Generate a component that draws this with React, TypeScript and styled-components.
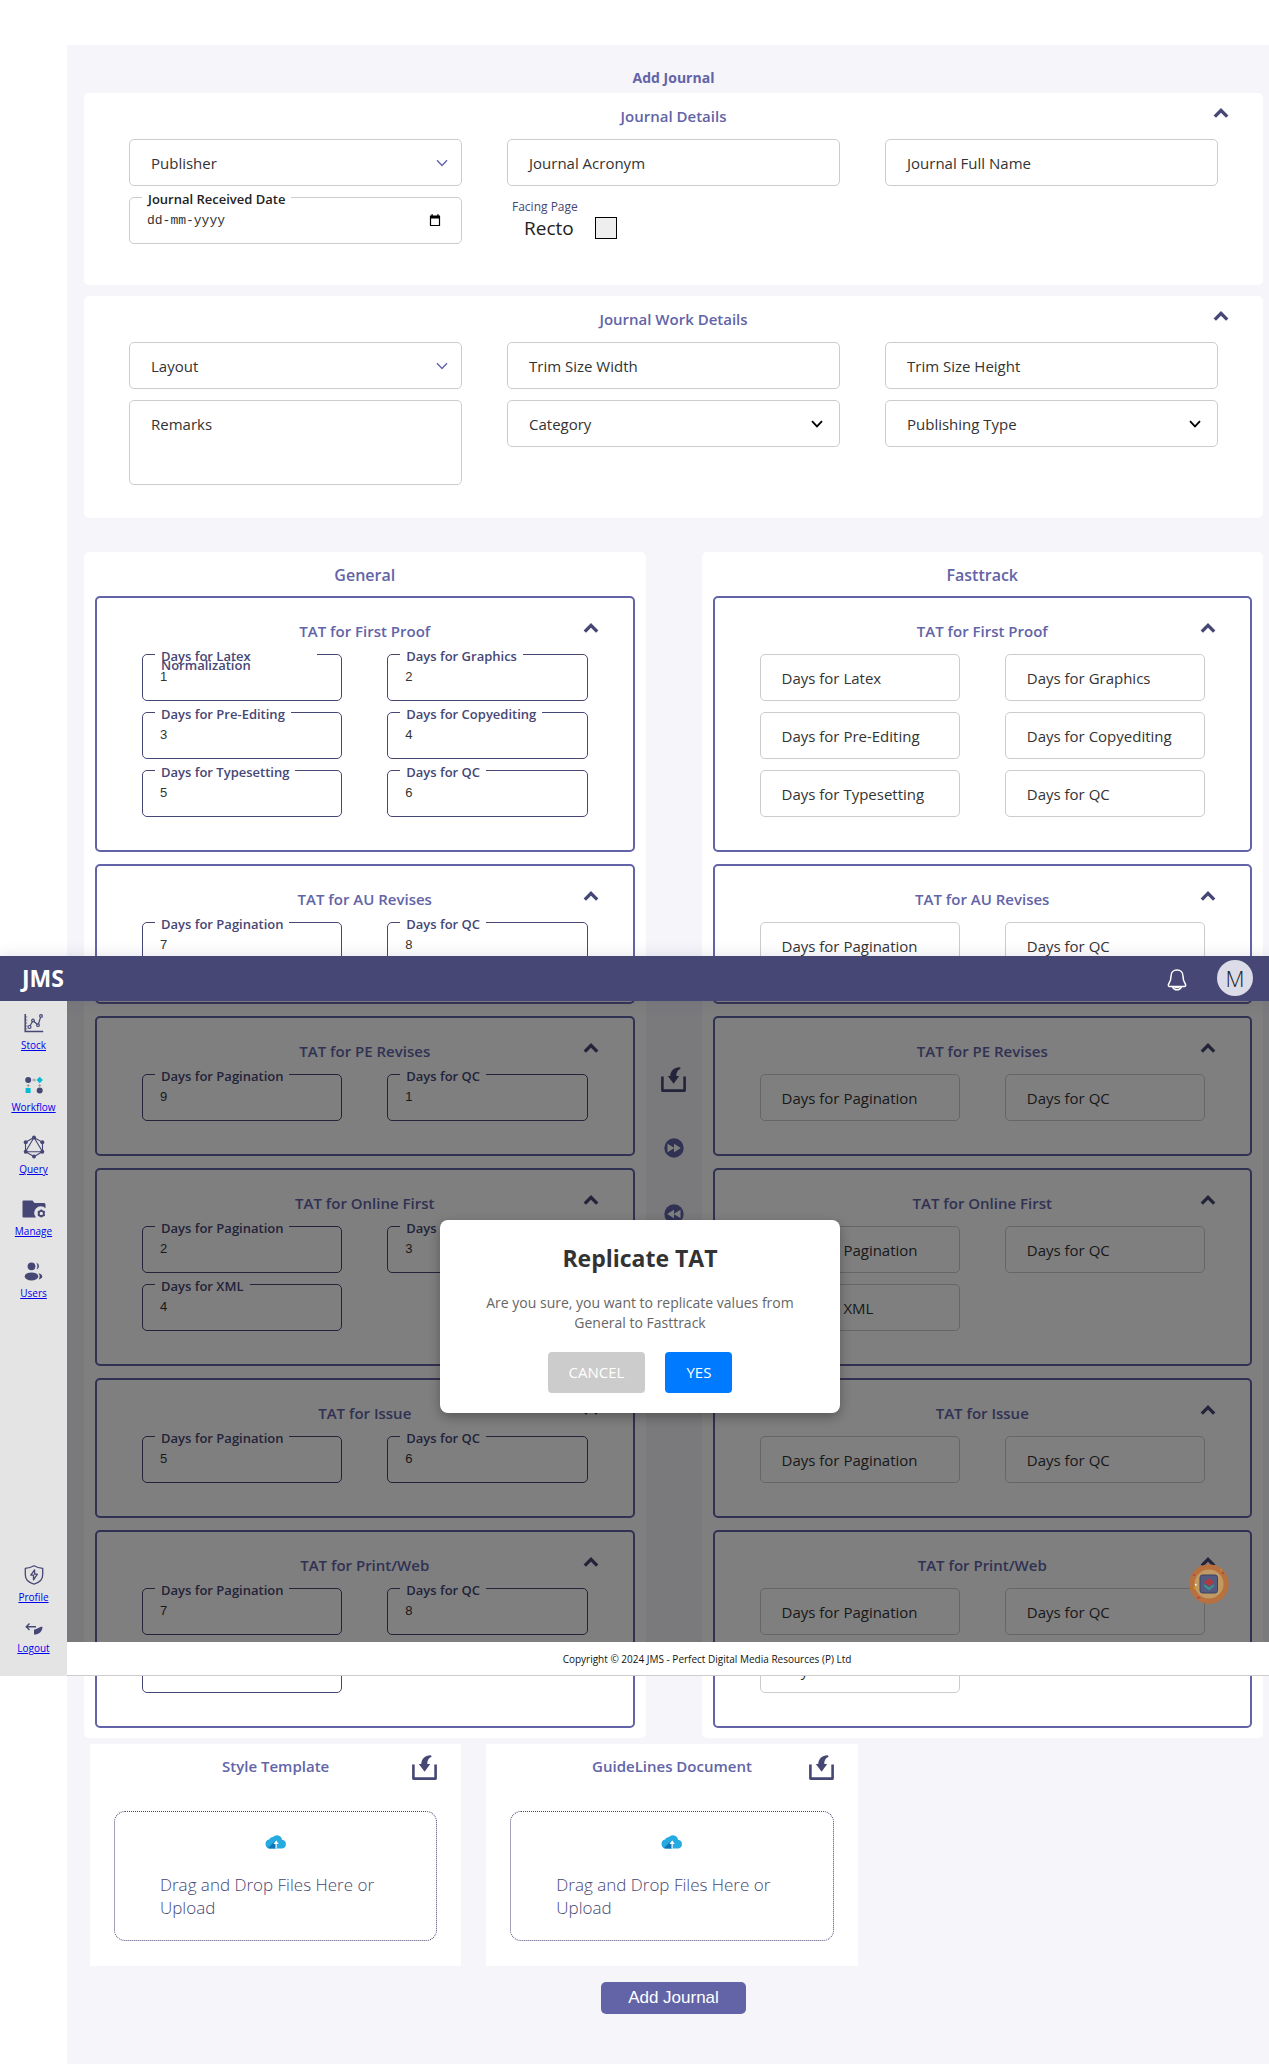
import React, { useId } from "react";
import styled, { createGlobalStyle, css } from "styled-components";

const color = {
  primary: "#6264a7",
  dark: "#464775",
  page: "#f5f5fa",
  line: "#cccccc",
  text: "#333333",
};

const sans = `"Open Sans", "Noto Sans", sans-serif`;

const GlobalStyle = createGlobalStyle`
  *, *::before, *::after { box-sizing: border-box; }
  body { margin: 0; background: #fff; font-family: ${sans}; color: ${color.text}; }
  h1, h2, h3, p { margin: 0; }
  button, input, select, textarea { font-family: inherit; margin: 0; }
`;

const Page = styled.div`
  position: relative;
  padding: 45px 0 0 67px;
`;

const Main = styled.main`
  background: ${color.page};
  padding: 0 6px 50px 17px;
`;

const PageTitle = styled.h1`
  padding: 22px 0 4px;
  font-size: 14px;
  line-height: 22px;
  font-weight: 700;
  text-align: center;
  color: ${color.primary};
`;

const Panel = styled.section<{ $bottom: number }>`
  background: #fff;
  border-radius: 5px;
  padding-bottom: ${(p) => p.$bottom}px;
  margin-bottom: 11px;
`;

const SectionHeader = styled.header`
  display: grid;
  grid-template-columns: 1fr auto 1fr;
  align-items: start;
  height: 46px;
  padding: 12px 34px 0;
`;

const SectionTitle = styled.h2`
  grid-column: 2;
  font-size: 15px;
  line-height: 22px;
  font-weight: 600;
  color: ${color.primary};
`;

const IconButton = styled.button`
  display: inline-flex;
  align-items: center;
  justify-content: center;
  justify-self: end;
  padding: 0;
  border: 0;
  background: none;
  color: ${color.dark};
  cursor: pointer;
`;

const FieldGrid = styled.div<{ $columns: number }>`
  display: grid;
  grid-template-columns: repeat(${(p) => p.$columns}, minmax(0, 1fr));
  gap: 11px 45px;
  align-items: start;
  padding: 0 45px;
`;

const FieldBox = styled.div<{ $active?: boolean; $height?: number }>`
  position: relative;
  display: flex;
  height: ${(p) => p.$height ?? 47}px;
  border: 1px solid ${(p) => (p.$active ? color.dark : color.line)};
  border-radius: 5px;
  background: #fff;
`;

const floated = css`
  top: -3px;
  left: 12px;
  max-width: calc(100% - 36px);
  padding: 0 6px;
  background: #fff;
  font-size: 13px;
  line-height: 9px;
  font-weight: 600;
  white-space: normal;
`;

const resting = css`
  top: 12px;
  left: 21px;
  font-size: 15px;
  line-height: 22px;
  font-weight: 400;
  white-space: nowrap;
  color: ${color.text};
`;

const FieldLabel = styled.label<{ $floated: boolean; $ink?: string }>`
  position: absolute;
  color: ${(p) => p.$ink ?? color.dark};
  ${(p) => (p.$floated ? floated : resting)}
`;

const control = css`
  flex: 1;
  min-width: 0;
  border: 0;
  outline: 0;
  background: transparent;
  color: ${color.text};
`;

const TextInput = styled.input`
  ${control}
  padding: 0 17px 2px;
  font-family: "Liberation Sans", sans-serif;
  font-size: 13px;
`;

const DateInput = styled.input`
  ${control}
  padding: 0 17px;
  font-family: "Liberation Mono", monospace;
  font-size: 13px;
  &::placeholder { color: ${color.text}; opacity: 1; }
`;

const Select = styled.select`
  ${control}
  appearance: none;
  padding: 0 21px;
  font-size: 15px;
`;

const SelectArrow = styled.span<{ $ink: string; $right: number }>`
  position: absolute;
  top: 0;
  right: ${(p) => p.$right}px;
  height: 100%;
  display: flex;
  align-items: center;
  color: ${(p) => p.$ink};
  pointer-events: none;
`;

const TextArea = styled.textarea`
  ${control}
  resize: none;
  padding: 12px 21px;
  font-size: 15px;
`;

const CalendarButton = styled(IconButton)`
  padding-right: 20px;
  color: #000;
`;

const Facing = styled.div`
  padding: 0 5px;
`;

const FacingCaption = styled.div`
  font-size: 12px;
  line-height: 20px;
  font-weight: 500;
  color: ${color.dark};
`;

const FacingRow = styled.label`
  display: flex;
  align-items: center;
  gap: 21px;
  padding-left: 12px;
  font-size: 19px;
  line-height: 22px;
  color: #222;
`;

const Checkbox = styled.input`
  appearance: none;
  width: 22px;
  height: 22px;
  border: 1px solid #000;
  background: #eeeeee;
`;

const Compare = styled.div`
  display: grid;
  grid-template-columns: minmax(0, 1fr) 56px minmax(0, 1fr);
  margin-top: 34px;
`;

const Track = styled.section`
  display: flex;
  flex-direction: column;
  gap: 12px;
  padding: 0 11px 10px;
  border-radius: 5px;
  background: #fff;
`;

const TrackTitle = styled.h2`
  height: 32px;
  padding-top: 12px;
  font-size: 16px;
  line-height: 22px;
  font-weight: 600;
  text-align: center;
  color: ${color.primary};
`;

const TatCard = styled.div`
  padding: 10px 0 33px;
  border: 2px solid ${color.primary};
  border-radius: 5px;
`;

const Transfer = styled.div`
  display: flex;
  flex-direction: column;
  align-items: center;
  justify-content: center;
  gap: 46px;
`;

const Uploads = styled.div`
  display: grid;
  grid-template-columns: repeat(3, minmax(0, 1fr));
  gap: 25px;
  padding: 6px 9px 16px 6px;
`;

const UploadCard = styled.section`
  padding: 0 24px 25px;
  background: #fff;
`;

const UploadHeader = styled.header`
  display: grid;
  grid-template-columns: 1fr auto 1fr;
  align-items: start;
  height: 67px;
  padding-top: 11px;
`;

const DropZone = styled.label`
  display: flex;
  flex-direction: column;
  align-items: center;
  height: 130px;
  padding: 22px 45px 0;
  border: 1px dotted ${color.dark};
  border-radius: 11px;
  color: ${color.dark};
  cursor: pointer;
`;

const DropText = styled.span`
  align-self: stretch;
  margin-top: 24px;
  font-size: 17px;
  line-height: 23px;
  font-weight: 300;
`;

const HiddenFile = styled.input`
  position: absolute;
  width: 1px;
  height: 1px;
  opacity: 0;
`;

const Actions = styled.div`
  display: flex;
  justify-content: center;
`;

const SubmitButton = styled.button`
  height: 32px;
  padding: 0 27px;
  border: 0;
  border-radius: 5px;
  background: ${color.primary};
  font-family: "Liberation Sans", sans-serif;
  font-size: 17px;
  color: #fff;
`;

/* The visible window: top bar, side navigation, footer and dialog float over the form. */
const Shell = styled.div`
  position: absolute;
  top: 956px;
  left: 0;
  right: 0;
  height: 720px;
  display: grid;
  grid-template: 45px minmax(0, 1fr) 34px / 67px minmax(0, 1fr);
`;

const TopBar = styled.header`
  grid-column: 1 / 3;
  z-index: 1;
  display: flex;
  align-items: center;
  padding: 0 16px 2px 22px;
  background: ${color.dark};
  box-shadow: 0 0 14px rgba(70, 71, 117, 0.16);
`;

const Brand = styled.span`
  margin-right: auto;
  font-size: 23px;
  line-height: 30px;
  font-weight: 700;
  color: #fff;
`;

const BellButton = styled(IconButton)`
  margin-right: 30px;
  padding-top: 4px;
  color: #fff;
`;

const Avatar = styled.button`
  width: 36px;
  height: 36px;
  padding: 0;
  border: 0;
  border-radius: 50%;
  background: #dcdce8;
  font-size: 22px;
  line-height: 36px;
  font-weight: 300;
  color: #222;
`;

const SideNav = styled.nav`
  grid-row: 2 / 4;
  z-index: 1;
  display: flex;
  flex-direction: column;
  padding: 10px 0 21px;
  background: #e4e4e4;
`;

const NavGroup = styled.div<{ $gap: number; $end?: boolean }>`
  display: flex;
  flex-direction: column;
  gap: ${(p) => p.$gap}px;
  margin-top: ${(p) => (p.$end ? "auto" : "0")};
`;

const NavLink = styled.a`
  display: flex;
  flex-direction: column;
  align-items: center;
  gap: 3px;
  font-size: 10px;
  line-height: 14px;
  color: #0000ee;
`;

const NavIcon = styled.span<{ $height?: number }>`
  display: flex;
  align-items: center;
  height: ${(p) => p.$height ?? 24}px;
  color: ${color.dark};
`;

const Footer = styled.footer`
  grid-column: 2;
  grid-row: 3;
  z-index: 1;
  padding-left: 78px;
  border-bottom: 1px solid ${color.line};
  background: #fff;
  font-size: 10px;
  line-height: 34px;
  text-align: center;
  color: #111;
`;

const Backdrop = styled.div`
  position: absolute;
  inset: 0;
  display: flex;
  align-items: center;
  justify-content: center;
  padding-left: 11px;
  background: rgba(0, 0, 0, 0.5);
`;

const Dialog = styled.div`
  width: 400px;
  padding: 20px 38px;
  border-radius: 8px;
  background: #fff;
  box-shadow: 0 4px 12px rgba(0, 0, 0, 0.3);
  text-align: center;
`;

const DialogTitle = styled.h2`
  font-size: 23px;
  line-height: 36px;
  font-weight: 700;
`;

const DialogText = styled.p`
  margin: 17px 0 19px;
  font-size: 14px;
  line-height: 20px;
  color: #666;
`;

const DialogActions = styled.div`
  display: flex;
  justify-content: center;
  gap: 20px;
`;

const DialogButton = styled.button<{ $tone: string }>`
  height: 41px;
  padding: 0 21px;
  border: 0;
  border-radius: 4px;
  background: ${(p) => p.$tone};
  font-size: 15px;
  color: #fff;
`;

const Badge = styled.button`
  position: absolute;
  right: 40px;
  bottom: 72px;
  width: 40px;
  height: 40px;
  padding: 0;
  border: 0;
  background: none;
`;

const ChevronUp = () => (
  <svg width="16" height="16" viewBox="0 0 16 16" fill="none" stroke="currentColor" strokeWidth="3.4">
    <path d="M1.8 11.6 8 5.4l6.2 6.2" />
  </svg>
);

const ChevronDown = ({ weight }: { weight: number }) => (
  <svg width="12" height="8" viewBox="0 0 12 8" fill="none" stroke="currentColor" strokeWidth={weight}>
    <path d="M1 1.2 6 6.4l5-5.2" />
  </svg>
);

const CalendarIcon = () => (
  <svg width="12" height="13" viewBox="0 0 12 13">
    <path d="M1.5 2.5h9v9h-9z" fill="none" stroke="currentColor" strokeWidth="1.2" />
    <path d="M1 1.6h10v3H1zM2.4.3h1.4v2H2.4zM8.2.3h1.4v2H8.2z" fill="currentColor" />
  </svg>
);

const ImportIcon = () => (
  <svg width="25" height="25" viewBox="0 0 25 25" fill="none">
    <path d="M1.4 9.6v14h22.2v-14" stroke="currentColor" strokeWidth="2.6" strokeLinejoin="round" />
    <path
      d="M19 .2C13 0 9.600 3.600 9.200 9H6.800l5.800 7.800 5.600-7.800h-2.900c-.2-3.200 1-5.900 4.300-7.200z"
      fill="currentColor"
    />
  </svg>
);

const SkipIcon = ({ back }: { back?: boolean }) => (
  <svg width="20" height="20" viewBox="0 0 20 20">
    <circle cx="10" cy="10" r="9.7" fill={color.primary} />
    <path
      d={back ? "M10 5.800v8.400L3.200 10zM16.500 5.800v8.400L9.700 10z" : "M3.500 5.800v8.400L10.300 10zM10 5.800v8.400L16.800 10z"}
      fill="#fff"
    />
  </svg>
);

const CloudIcon = () => (
  <svg width="22" height="15" viewBox="0 0 22 15">
    <path d="M5 14.500a4.500 4.500 0 0 1-.9-8.900A4 4 0 0 1 8 2.900 5.200 5.200 0 0 1 17 5.800a4.400 4.400 0 0 1 .3 8.700z" fill="#25aae2" />
    <path d="M3 13.900 11 6v8.500H5a4 4 0 0 1-2-.6z" fill="#1173ba" />
    <path d="M10.500 14.500V10H8.500L11.100 6.200 13.700 10h-2v4.500z" fill="#fff" />
  </svg>
);

const BellIcon = () => (
  <svg width="20" height="22" viewBox="0 0 20 22" fill="none" stroke="currentColor" strokeWidth="1.5">
    <path d="M10 1C6.200 1 4 3.800 4 7.200c0 4.200-1 5.300-2.300 7.700-.7 1.400-.3 2.500 1 2.500h14.600c1.300 0 1.700-1.100 1-2.500C17 12.500 16 11.400 16 7.200 16 3.800 13.800 1 10 1z" />
    <path d="M5.500 17.800c1 2 2.500 3 4.500 3s3.500-1 4.500-3" />
    <path d="M7.500 18.400h5" />
  </svg>
);

const StockIcon = () => (
  <svg width="20" height="20" viewBox="0 0 20 20" fill="none" stroke="currentColor" strokeWidth="1.200">
    <path d="M1.200 1v17.600h18" strokeWidth="1.500" />
    <path d="M2 4h1.300M2 7h1.300M2 10h1.300M2 13h1.300M2 16h1.300" strokeWidth=".8" />
    <path d="M6 12.800 8.500 8.500M9.800 8.300l3.600 3.200M14.500 11 16.500 4.300" />
    <circle cx="5.500" cy="14" r="1.500" />
    <circle cx="9" cy="7.500" r="1.300" />
    <circle cx="14" cy="12.200" r="1.300" />
    <circle cx="17" cy="3" r="1.400" />
  </svg>
);

const WorkflowIcon = () => (
  <svg width="18" height="18" viewBox="0 0 18 18">
    <circle cx="3.200" cy="4" r="3" fill="currentColor" />
    <circle cx="14.700" cy="14.500" r="3" fill="currentColor" />
    <path d="m14.700.8 3.200 3.200-3.200 3.200L11.500 4z" fill="#00bcd4" />
    <path d="M.600 12h5v5h-5z" fill="#00bcd4" />
    <path d="M7 4h4M9.200 2.500v3M3.200 8v3.500M1.700 9.500h3M14.700 8v3M13.200 9.500h3" stroke="#999" strokeWidth=".9" />
  </svg>
);

const QueryIcon = () => (
  <svg width="22" height="24" viewBox="0 0 22 24" fill="none" stroke="currentColor" strokeWidth="1.100">
    <path d="m11 2.500 8.500 4.800v9.400L11 21.500l-8.500-4.800V7.300zM11 2.500 2.500 16.700h17z" />
    <g fill="currentColor" stroke="none">
      <circle cx="11" cy="2.500" r="2" />
      <circle cx="19.300" cy="7.300" r="2" />
      <circle cx="19.300" cy="16.700" r="2" />
      <circle cx="11" cy="21.500" r="2" />
      <circle cx="2.700" cy="7.300" r="2" />
      <circle cx="2.700" cy="16.700" r="2" />
    </g>
  </svg>
);

const ManageIcon = () => (
  <svg width="24" height="18" viewBox="0 0 24 18">
    <path d="M1.500.5h9l2 2.500H22a1.500 1.500 0 0 1 1.500 1.500v3.800A6.300 6.300 0 0 0 14 17.500H1.500A1 1 0 0 1 .5 16.500v-15a1 1 0 0 1 1-1z" fill="currentColor" />
    <circle cx="19.300" cy="13.500" r="2.600" fill="none" stroke="currentColor" strokeWidth="1.800" />
    <path d="M19.300 9.500v2M19.300 15.500v2M15.800 11.500l1.600.9M21.200 14.600l1.600.9M15.800 15.500l1.600-.9M21.200 12.400l1.600-.9" stroke="currentColor" strokeWidth="1.500" />
  </svg>
);

const UsersIcon = () => (
  <svg width="20" height="19" viewBox="0 0 20 19" fill="currentColor">
    <circle cx="7.500" cy="4.300" r="3.900" />
    <path d="M12.500.8a3.700 3.700 0 0 1 0 7c1.200-2.200 1.200-4.800 0-7z" />
    <ellipse cx="7.500" cy="14.400" rx="6.800" ry="4" />
    <path d="M14.500 11.200c5 .8 5 5.500 0 6.300 1.500-2 1.500-4.300 0-6.300z" />
  </svg>
);

const ProfileIcon = () => (
  <svg width="20" height="20" viewBox="0 0 20 20" fill="none" stroke="currentColor" strokeWidth="1.300" strokeLinejoin="round">
    <path d="M10 .8c2.500 1.500 5.400 2.300 8.700 2.500v6.500c0 4.600-3.400 7.900-8.700 9.400-5.300-1.500-8.700-4.800-8.700-9.400V3.300C4.600 3.100 7.500 2.300 10 .8z" />
    <path d="m10.600 4.800-3.800 5.400h2.700v4.600l3.900-5.600h-2.800z" />
  </svg>
);

const LogoutIcon = () => (
  <svg width="18" height="12" viewBox="0 0 18 12">
    <path d="M11 3.800H1.500M4.500.6 1.300 3.800l3.200 3.200" fill="none" stroke="currentColor" strokeWidth="1.400" />
    <path d="M17.500 3.800c-.2 4.700-3.200 7.800-8.500 7.800V6.600c2.500.2 4.500-2.800 8.500-2.800z" fill="currentColor" />
  </svg>
);

const BadgeIcon = () => (
  <svg width="40" height="40" viewBox="0 0 40 40">
    <circle cx="20" cy="20" r="19.700" fill="#b9703f" />
    <circle cx="20" cy="20" r="14.500" fill="#c09a63" />
    <path d="M30.500 4.500l3 1.500-1.500 1zM4.500 22l3 1.500-2.500 2z" fill="#c79a12" />
    <path d="M33 8.500h2v1.300h-2zM4 10.500h2v1.300H4zM8.500 33h2v1.500h-2z" fill="#b8323c" />
    <circle cx="6.800" cy="20.800" r="1" fill="#eee" />
    <rect x="11" y="11" width="17.500" height="18" rx="2.500" fill="#555a80" stroke="#3d4165" />
    <path d="m20 14.200 4.800 4-4.800 3.800-4.800-3.800z" fill="#b5373a" />
    <path d="m15.200 20 4.800 3.600 4.800-3.600v2.600L20 26.500l-4.800-3.900z" fill="#3f918f" />
  </svg>
);

type Entry = { label: string; rest?: string; value?: string };

function Field({ label, value = "" }: { label: string; value?: string }) {
  const id = useId();
  const filled = value !== "";
  return (
    <FieldBox $active={filled}>
      <TextInput id={id} defaultValue={value} />
      <FieldLabel htmlFor={id} $floated={filled}>
        {label}
      </FieldLabel>
    </FieldBox>
  );
}

function SelectField({ label, plain }: { label: string; plain?: boolean }) {
  return (
    <FieldBox>
      <Select aria-label={label}>
        <option>{label}</option>
      </Select>
      <SelectArrow $ink={plain ? "#000" : color.primary} $right={plain ? 16 : 13}>
        <ChevronDown weight={plain ? 1.8 : 1.4} />
      </SelectArrow>
    </FieldBox>
  );
}

function DateField() {
  const id = useId();
  return (
    <FieldBox>
      <DateInput id={id} placeholder="dd-mm-yyyy" />
      <FieldLabel htmlFor={id} $floated $ink="#222">
        Journal Received Date
      </FieldLabel>
      <CalendarButton type="button" aria-label="Pick a date">
        <CalendarIcon />
      </CalendarButton>
    </FieldBox>
  );
}

function RemarksField() {
  const id = useId();
  return (
    <FieldBox $height={85}>
      <TextArea id={id} />
      <FieldLabel htmlFor={id} $floated={false}>
        Remarks
      </FieldLabel>
    </FieldBox>
  );
}

function Heading({ children }: { children: string }) {
  return (
    <SectionHeader>
      <SectionTitle>{children}</SectionTitle>
      <IconButton type="button" aria-label={`Collapse ${children}`}>
        <ChevronUp />
      </IconButton>
    </SectionHeader>
  );
}

const pagination: Entry = { label: "Days for Pagination" };
const qc: Entry = { label: "Days for QC" };
const xml: Entry = { label: "Days for XML" };

const stages: { title: string; fields: Entry[]; values: string[] }[] = [
  {
    title: "TAT for First Proof",
    fields: [
      { label: "Days for Latex Normalization", rest: "Days for Latex" },
      { label: "Days for Graphics" },
      { label: "Days for Pre-Editing" },
      { label: "Days for Copyediting" },
      { label: "Days for Typesetting" },
      qc,
    ],
    values: ["1", "2", "3", "4", "5", "6"],
  },
  { title: "TAT for AU Revises", fields: [pagination, qc], values: ["7", "8"] },
  { title: "TAT for PE Revises", fields: [pagination, qc], values: ["9", "1"] },
  { title: "TAT for Online First", fields: [pagination, qc, xml], values: ["2", "3", "4"] },
  { title: "TAT for Issue", fields: [pagination, qc], values: ["5", "6"] },
  { title: "TAT for Print/Web", fields: [pagination, qc, xml], values: ["7", "8", "9"] },
];

function TrackColumn({ title, filled }: { title: string; filled?: boolean }) {
  return (
    <Track>
      <TrackTitle>{title}</TrackTitle>
      {stages.map((stage) => (
        <TatCard key={stage.title}>
          <Heading>{stage.title}</Heading>
          <FieldGrid $columns={2}>
            {stage.fields.map((f, i) => (
              <Field
                key={f.label}
                label={filled ? f.label : f.rest ?? f.label}
                value={filled ? stage.values[i] : ""}
              />
            ))}
          </FieldGrid>
        </TatCard>
      ))}
    </Track>
  );
}

function Upload({ title }: { title: string }) {
  return (
    <UploadCard>
      <UploadHeader>
        <SectionTitle>{title}</SectionTitle>
        <IconButton type="button" aria-label={`Import ${title}`}>
          <ImportIcon />
        </IconButton>
      </UploadHeader>
      <DropZone>
        <CloudIcon />
        <DropText>Drag and Drop Files Here or Upload</DropText>
        <HiddenFile type="file" />
      </DropZone>
    </UploadCard>
  );
}

const topLinks = [
  { label: "Stock", icon: <StockIcon /> },
  { label: "Workflow", icon: <WorkflowIcon /> },
  { label: "Query", icon: <QueryIcon /> },
  { label: "Manage", icon: <ManageIcon /> },
  { label: "Users", icon: <UsersIcon /> },
];

export default function App() {
  return (
    <Page>
      <GlobalStyle />
      <Main>
        <PageTitle>Add Journal</PageTitle>

        <Panel $bottom={41}>
          <Heading>Journal Details</Heading>
          <FieldGrid $columns={3}>
            <SelectField label="Publisher" />
            <Field label="Journal Acronym" />
            <Field label="Journal Full Name" />
            <DateField />
            <Facing>
              <FacingCaption>Facing Page</FacingCaption>
              <FacingRow>
                Recto
                <Checkbox type="checkbox" />
              </FacingRow>
            </Facing>
          </FieldGrid>
        </Panel>

        <Panel $bottom={33}>
          <Heading>Journal Work Details</Heading>
          <FieldGrid $columns={3}>
            <SelectField label="Layout" />
            <Field label="Trim Size Width" />
            <Field label="Trim Size Height" />
            <RemarksField />
            <SelectField label="Category" plain />
            <SelectField label="Publishing Type" plain />
          </FieldGrid>
        </Panel>

        <Compare>
          <TrackColumn title="General" filled />
          <Transfer>
            <IconButton type="button" aria-label="Import TAT">
              <ImportIcon />
            </IconButton>
            <IconButton type="button" aria-label="Copy General to Fasttrack">
              <SkipIcon />
            </IconButton>
            <IconButton type="button" aria-label="Copy Fasttrack to General">
              <SkipIcon back />
            </IconButton>
          </Transfer>
          <TrackColumn title="Fasttrack" />
        </Compare>

        <Uploads>
          <Upload title="Style Template" />
          <Upload title="GuideLines Document" />
        </Uploads>

        <Actions>
          <SubmitButton type="submit">Add Journal</SubmitButton>
        </Actions>
      </Main>

      <Shell>
        <TopBar>
          <Brand>JMS</Brand>
          <BellButton type="button" aria-label="Notifications">
            <BellIcon />
          </BellButton>
          <Avatar type="button">M</Avatar>
        </TopBar>
        <SideNav>
          <NavGroup $gap={21}>
            {topLinks.map((link) => (
              <NavLink key={link.label} href="#">
                <NavIcon>{link.icon}</NavIcon>
                {link.label}
              </NavLink>
            ))}
          </NavGroup>
          <NavGroup $gap={16} $end>
            <NavLink href="#">
              <NavIcon>
                <ProfileIcon />
              </NavIcon>
              Profile
            </NavLink>
            <NavLink href="#">
              <NavIcon $height={18}>
                <LogoutIcon />
              </NavIcon>
              Logout
            </NavLink>
          </NavGroup>
        </SideNav>
        <Footer>Copyright © 2024 JMS - Perfect Digital Media Resources (P) Ltd</Footer>
        <Backdrop>
          <Badge type="button" aria-label="Open assistant">
            <BadgeIcon />
          </Badge>
          <Dialog role="dialog" aria-modal="true" aria-labelledby="replicate-title">
            <DialogTitle id="replicate-title">Replicate TAT</DialogTitle>
            <DialogText>Are you sure, you want to replicate values from General to Fasttrack</DialogText>
            <DialogActions>
              <DialogButton type="button" $tone="#cccccc">
                CANCEL
              </DialogButton>
              <DialogButton type="button" $tone="#007bff">
                YES
              </DialogButton>
            </DialogActions>
          </Dialog>
        </Backdrop>
      </Shell>
    </Page>
  );
}
